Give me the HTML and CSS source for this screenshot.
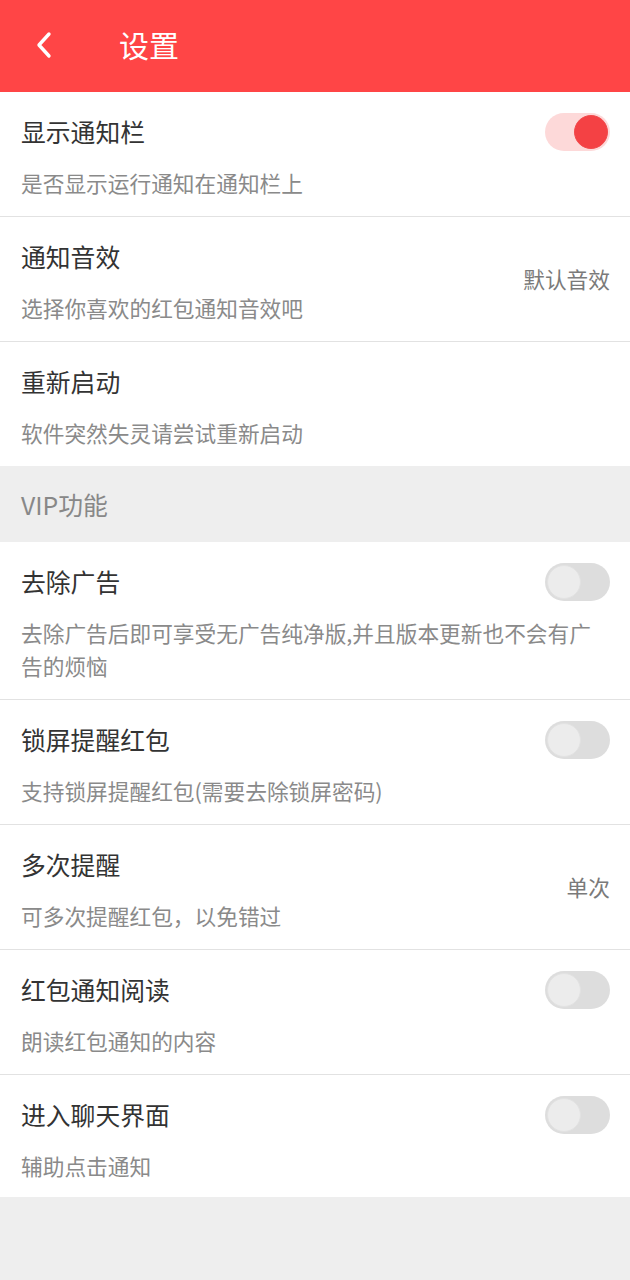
FILE: index.html
```html
<!DOCTYPE html>
<html lang="zh-CN">

<head>
    <meta charset="UTF-8">
    <meta name="viewport" content="width=device-width, initial-scale=1.0">
    <title>设置</title>
    <link rel="stylesheet" href="styles.css">
</head>

<body>
    <!-- Top bar -->
    <div class="topbar">
        <span class="back-btn">
            <svg width="20" height="28" viewBox="0 0 20 28">
                <polyline points="15,3 5,14 15,25" fill="none" stroke="#fff" stroke-width="3.4" stroke-linecap="round" stroke-linejoin="round" />
            </svg>
        </span>
        <h1 class="topbar-title">设置</h1>
    </div>

    <!-- General settings -->
    <div class="setting-list">
        <div class="setting-row">
            <div class="row-head">
                <span class="row-title">显示通知栏</span>
                <span class="switch on"><span class="knob"></span></span>
            </div>
            <p class="row-desc">是否显示运行通知在通知栏上</p>
        </div>

        <div class="setting-row with-value">
            <div class="row-text">
                <div class="row-head">
                    <span class="row-title">通知音效</span>
                </div>
                <p class="row-desc">选择你喜欢的红包通知音效吧</p>
            </div>
            <span class="row-value">默认音效</span>
        </div>

        <div class="setting-row">
            <div class="row-head">
                <span class="row-title">重新启动</span>
            </div>
            <p class="row-desc">软件突然失灵请尝试重新启动</p>
        </div>
    </div>

    <div class="section-label">VIP功能</div>

    <!-- VIP settings -->
    <div class="setting-list vip-list">
        <div class="setting-row">
            <div class="row-head">
                <span class="row-title">去除广告</span>
                <span class="switch"><span class="knob"></span></span>
            </div>
            <p class="row-desc">去除广告后即可享受无广告纯净版,并且版本更新也不会有广告的烦恼</p>
        </div>

        <div class="setting-row">
            <div class="row-head">
                <span class="row-title">锁屏提醒红包</span>
                <span class="switch"><span class="knob"></span></span>
            </div>
            <p class="row-desc">支持锁屏提醒红包(需要去除锁屏密码)</p>
        </div>

        <div class="setting-row with-value">
            <div class="row-text">
                <div class="row-head">
                    <span class="row-title">多次提醒</span>
                </div>
                <p class="row-desc">可多次提醒红包，以免错过</p>
            </div>
            <span class="row-value">单次</span>
        </div>

        <div class="setting-row">
            <div class="row-head">
                <span class="row-title">红包通知阅读</span>
                <span class="switch"><span class="knob"></span></span>
            </div>
            <p class="row-desc">朗读红包通知的内容</p>
        </div>

        <div class="setting-row">
            <div class="row-head">
                <span class="row-title">进入聊天界面</span>
                <span class="switch"><span class="knob"></span></span>
            </div>
            <p class="row-desc">辅助点击通知</p>
        </div>
    </div>
</body>

</html>
```

FILE: styles.css
```css
/* Page */
body {
    font-family: "Noto Sans CJK SC", "Noto Sans", sans-serif;
    background-color: #eeeeee;
    margin: 0;
    padding: 0;
    color: #333;
}

/* Top bar */
.topbar {
    height: 92px;
    background-color: #ff4546;
    display: flex;
    align-items: center;
    padding-left: 34px;
    box-sizing: border-box;
}

.back-btn {
    display: flex;
    width: 20px;
    height: 28px;
    margin-top: -2px;
}

.topbar-title {
    margin: 0 0 0 65px;
    font-size: 30px;
    font-weight: normal;
    color: #fff;
    line-height: 40px;
    margin-top: -4px;
}

/* Setting rows */
.setting-list {
    background-color: #fff;
}

.setting-row {
    padding: 22px 20px 17px 21px;
    border-bottom: 1px solid #e2e2e2;
}

.setting-row:last-child {
    border-bottom: none;
}

.vip-list .setting-row:last-child {
    padding-bottom: 15px;
}

.setting-row.with-value {
    display: flex;
    align-items: center;
    justify-content: space-between;
}

.row-head {
    display: flex;
    align-items: center;
    justify-content: space-between;
    height: 35px;
    margin-bottom: 17px;
}

.row-title {
    font-size: 24.8px;
    line-height: 35px;
    color: #333;
}

.row-desc {
    margin: 0;
    font-size: 21.7px;
    line-height: 33px;
    color: #8a8a8a;
    padding-right: 1px;
}

.row-value {
    font-size: 21.7px;
    color: #7a7a7a;
    margin-top: -7px;
}

/* Switch */
.switch {
    position: relative;
    width: 65px;
    height: 38px;
    border-radius: 19px;
    background-color: #dddddd;
    flex-shrink: 0;
}

.switch .knob {
    position: absolute;
    top: 2px;
    left: 2px;
    width: 32px;
    height: 32px;
    border-radius: 50%;
    background-color: #ececec;
    border: 1px solid #e2e2e2;
}

.switch.on {
    background-color: #fdd9d9;
}

.switch.on .knob {
    left: auto;
    right: 2px;
    background-color: #f44144;
    border-color: #f24a4c;
}

/* Section label */
.section-label {
    height: 76px;
    line-height: 76px;
    padding-left: 21px;
    font-size: 24.8px;
    color: #888;
    background-color: #eeeeee;
}
```
